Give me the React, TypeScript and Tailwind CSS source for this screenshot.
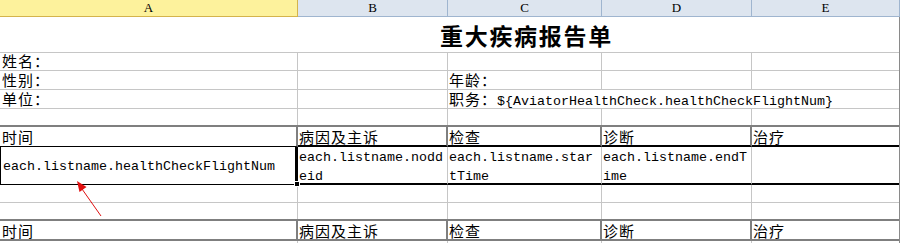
import React from "react";

const mono = "font-['Liberation_Mono',monospace] text-[13.33px] tracking-normal";

function HeaderRow() {
  return (
    <div className="flex h-[20px] text-[15px] leading-[17px] tracking-[1px]">
      <div className="w-[298px] h-full border-r-2 border-b-2 border-[#7f7f7f] pl-[2px] pt-[1px]">时间</div>
      <div className="w-[150px] h-full border-r-2 border-b-2 border-[#7f7f7f] pl-[1px] pt-[1px]">病因及主诉</div>
      <div className="w-[154px] h-full border-r-2 border-b-2 border-[#7f7f7f] pl-[1px] pt-[1px]">检查</div>
      <div className="w-[150px] h-full border-r-2 border-b-2 border-[#7f7f7f] pl-[1px] pt-[1px]">诊断</div>
      <div className="w-[147px] h-full border-b-2 border-[#7f7f7f] pl-[1px] pt-[1px]">治疗</div>
    </div>
  );
}

export default function App() {
  return (
    <div className="relative w-[900px] h-[243px] overflow-hidden bg-white text-black font-['Noto_Sans_CJK_SC',sans-serif]">
      {/* column headers */}
      <div className="flex h-[17px] font-['Liberation_Serif',serif] text-[13px] leading-[16px]">
        <div className="w-[298px] bg-[#fdf29c] border-r border-b border-[#d4b44c] text-center">A</div>
        <div className="w-[150px] bg-[#dde5ef] border-r border-b border-[#9fb5cf] text-center">B</div>
        <div className="w-[154px] bg-[#dde5ef] border-r border-b border-[#9fb5cf] text-center">C</div>
        <div className="w-[150px] bg-[#dde5ef] border-r border-b border-[#9fb5cf] text-center">D</div>
        <div className="w-[148px] bg-[#dde5ef] border-b border-r border-[#9fb5cf] text-center">E</div>
      </div>

      <div className="w-[900px] border-r border-[#8a8a8a]">
        {/* title */}
        <div className="flex h-[36px] border-b border-[#c6c6c6] items-end">
          <div className="pl-[440px] pb-[5px] text-[23px] font-bold leading-[24px] tracking-[1.7px] whitespace-nowrap">
            重大疾病报告单
          </div>
        </div>

        {/* 姓名 */}
        <div className="flex h-[18px] text-[15px] leading-[16px] tracking-[1px]">
          <div className="w-[298px] border-r border-b border-[#c6c6c6] pl-[2px]">姓名：</div>
          <div className="w-[150px] border-r border-b border-[#c6c6c6]"></div>
          <div className="w-[154px] border-r border-b border-[#c6c6c6]"></div>
          <div className="w-[150px] border-r border-b border-[#c6c6c6]"></div>
          <div className="w-[147px] border-b border-[#c6c6c6]"></div>
        </div>

        {/* 性别 / 年龄 */}
        <div className="flex h-[19px] text-[15px] leading-[16px] tracking-[1px]">
          <div className="w-[298px] border-r border-b border-[#c6c6c6] pl-[2px] pt-[1px]">性别：</div>
          <div className="w-[150px] border-r border-b border-[#c6c6c6]"></div>
          <div className="w-[154px] border-r border-b border-[#c6c6c6] pl-[1px] pt-[1px]">年龄：</div>
          <div className="w-[150px] border-r border-b border-[#c6c6c6]"></div>
          <div className="w-[147px] border-b border-[#c6c6c6]"></div>
        </div>

        {/* 单位 / 职务 */}
        <div className="flex h-[19px] text-[15px] leading-[16px] tracking-[1px]">
          <div className="w-[298px] border-r border-b border-[#c6c6c6] pl-[2px] pt-[1px]">单位：</div>
          <div className="w-[150px] border-r border-b border-[#c6c6c6]"></div>
          <div className="w-[154px] border-b border-[#c6c6c6] pl-[1px] pt-[1px] whitespace-nowrap relative z-10">
            职务：<span className={mono}>{"${AviatorHealthCheck.healthCheckFlightNum}"}</span>
          </div>
          <div className="w-[150px] border-b border-[#c6c6c6]"></div>
          <div className="w-[147px] border-b border-[#c6c6c6]"></div>
        </div>

        {/* empty row with thick bottom */}
        <div className="flex h-[18px] border-b-2 border-[#7f7f7f]">
          <div className="w-[298px] border-r border-[#c6c6c6]"></div>
          <div className="w-[150px] border-r border-[#c6c6c6]"></div>
          <div className="w-[154px] border-r border-[#c6c6c6]"></div>
          <div className="w-[150px] border-r border-[#c6c6c6]"></div>
          <div className="w-[147px]"></div>
        </div>

        {/* header row 1 */}
        <div className="flex h-[20px] text-[15px] leading-[17px] tracking-[1px]">
          <div className="w-[298px] h-full border-r-2 border-r-[#7f7f7f] border-b border-b-black pl-[2px] pt-[1px]">时间</div>
          <div className="w-[150px] h-full border-r-2 border-r-[#7f7f7f] border-b-2 border-b-black pl-[1px] pt-[1px]">病因及主诉</div>
          <div className="w-[154px] h-full border-r-2 border-r-[#7f7f7f] border-b-2 border-b-black pl-[1px] pt-[1px]">检查</div>
          <div className="w-[150px] h-full border-r-2 border-r-[#7f7f7f] border-b-2 border-b-black pl-[1px] pt-[1px]">诊断</div>
          <div className="w-[147px] h-full border-b-2 border-b-black pl-[1px] pt-[1px]">治疗</div>
        </div>

        {/* data row */}
        <div className="flex h-[38px]">
          <div className={`w-[298px] h-full border-l border-b border-black border-r-[3px] pl-[2px] pt-[3px] flex items-center ${mono}`}>
            each.listname.healthCheckFlightNum
          </div>
          <div className={`w-[150px] h-full border-r border-r-[#c6c6c6] border-b-2 border-b-black pl-[1px] pt-[1px] leading-[19px] ${mono}`}>
            each.listname.nodd<br />eid
          </div>
          <div className={`w-[154px] h-full border-r border-r-[#c6c6c6] border-b-2 border-b-black pl-[1px] pt-[1px] leading-[19px] ${mono}`}>
            each.listname.star<br />tTime
          </div>
          <div className={`w-[150px] h-full border-r border-r-[#c6c6c6] border-b-2 border-b-black pl-[1px] pt-[1px] leading-[19px] ${mono}`}>
            each.listname.endT<br />ime
          </div>
          <div className="w-[147px] h-full border-b-2 border-b-black"></div>
        </div>

        {/* empty row */}
        <div className="flex h-[18px] border-b border-[#c6c6c6]">
          <div className="w-[298px] border-r border-[#c6c6c6]"></div>
          <div className="w-[150px] border-r border-[#c6c6c6]"></div>
          <div className="w-[154px] border-r border-[#c6c6c6]"></div>
          <div className="w-[150px] border-r border-[#c6c6c6]"></div>
          <div className="w-[147px]"></div>
        </div>

        {/* empty row thick bottom */}
        <div className="flex h-[18px] border-b-2 border-[#7f7f7f]">
          <div className="w-[298px] border-r border-[#c6c6c6]"></div>
          <div className="w-[150px] border-r border-[#c6c6c6]"></div>
          <div className="w-[154px] border-r border-[#c6c6c6]"></div>
          <div className="w-[150px] border-r border-[#c6c6c6]"></div>
          <div className="w-[147px]"></div>
        </div>

        {/* header row 2 */}
        <HeaderRow />

        {/* remainder */}
        <div className="flex h-[10px]">
          <div className="w-[298px] border-r border-[#c6c6c6]"></div>
          <div className="w-[150px] border-r border-[#c6c6c6]"></div>
          <div className="w-[154px] border-r border-[#c6c6c6]"></div>
          <div className="w-[150px] border-r border-[#c6c6c6]"></div>
          <div className="w-[147px]"></div>
        </div>
      </div>

      {/* fill handle */}
      <div className="absolute left-[294px] top-[181px] w-[6px] h-[6px] bg-black border border-white"></div>

      {/* red arrow annotation */}
      <svg className="absolute left-0 top-0 pointer-events-none" width="900" height="243" viewBox="0 0 900 243">
        <line x1="101" y1="216" x2="82" y2="189" stroke="#e01010" strokeWidth="1" />
        <polygon points="77,181 86.5,187 79.5,192" fill="#e01010" />
      </svg>
    </div>
  );
}
